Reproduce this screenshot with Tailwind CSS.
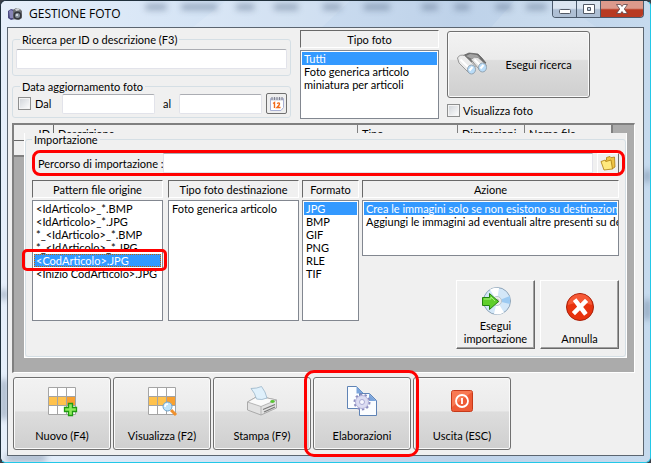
<!DOCTYPE html>
<html lang="it">
<head>
<meta charset="utf-8">
<title>GESTIONE FOTO</title>
<script src="https://cdn.jsdelivr.net/npm/@tailwindcss/browser@4"></script>
</head>
<body class="bg-[#3a3f48] font-[Lato,'Liberation_Sans',sans-serif] text-[11px] leading-[13px] text-black">
<main class="relative flex min-h-screen flex-col overflow-hidden rounded-md border border-[#20303c] border-r-[#22c8e8] border-b-[#22c8e8] bg-[#bcd2ea] px-[6px] pb-[6px]">
  <svg class="absolute inset-0 h-full w-full" preserveAspectRatio="none" viewBox="0 0 651 463" aria-hidden="true">
    <defs>
      <filter id="soft" x="-20%" y="-100%" width="140%" height="300%"><feGaussianBlur stdDeviation="3"/></filter>
      <linearGradient id="glass" x1="0" x2="1"><stop offset="0" stop-color="#e6effa"/><stop offset=".3" stop-color="#d5e4f5"/><stop offset=".7" stop-color="#bed2e9"/><stop offset="1" stop-color="#c6daee"/></linearGradient>
    </defs>
    <rect width="651" height="463" fill="url(#glass)"/>
    <path d="M190 28L225 0H350L320 28zM490 28L515 0H560L600 28z" fill="#fff" opacity=".12"/>
    <g fill="#566b88" opacity=".5" filter="url(#soft)">
      <rect x="145" y="3" width="21" height="6"/><rect x="181" y="3" width="36" height="6"/><rect x="236" y="3" width="18" height="6"/><rect x="274" y="3" width="24" height="6"/><rect x="323" y="3" width="18" height="6"/><rect x="364" y="3" width="26" height="6"/><rect x="422" y="3" width="16" height="6"/><rect x="455" y="3" width="15" height="6"/><rect x="496" y="3" width="16" height="6"/><rect x="527" y="3" width="20" height="6"/>
      <rect x="0" y="290" width="6" height="10"/><rect x="0" y="380" width="6" height="40"/><rect x="645" y="170" width="6" height="12"/><rect x="645" y="300" width="6" height="20"/><rect x="5" y="456" width="40" height="6"/>
    </g>
  </svg>

  <header class="relative flex h-[26px] items-start justify-between">
    <div class="flex items-center gap-[6px] pt-[5px]">
      <svg class="h-4 w-4" viewBox="0 0 16 16" aria-hidden="true">
        <path d="M1 5l3-2 4 1v9l-4 1-3-2z" fill="#4b4a80"/><path d="M2 5l2-1 2 1v7H3z" fill="#8886b8"/>
        <path d="M6 4l3-2 4 1 2 2v7l-3 2-6-1z" fill="#6b6e73"/><path d="M8 3l3-1 2 2-4 1z" fill="#d0d3d6"/>
        <circle cx="10.500" cy="9.500" r="4" fill="#33363c"/><circle cx="10.500" cy="9.500" r="2.500" fill="#87909c"/><circle cx="10" cy="9" r="1" fill="#e4ebf2"/>
      </svg>
      <h1 class="font-['Open_Sans','Noto_Sans',sans-serif] text-[12px] leading-4">GESTIONE FOTO</h1>
    </div>
    <div class="flex h-[17px] overflow-hidden rounded-b-[4px] border border-t-0 border-[#4b5a6c]">
      <button aria-label="Riduci a icona" class="flex w-6 items-center justify-center border-r border-[#4b5a6c] bg-linear-to-b from-[#dbe5f0] from-45% to-[#aebfd4] to-55%">
        <svg class="h-[14px] w-4" viewBox="0 0 16 14" aria-hidden="true"><rect x="2.500" y="7.500" width="11" height="4" rx="1" fill="#fff" stroke="#535a66"/></svg>
      </button>
      <button aria-label="Ingrandisci" class="flex w-6 items-center justify-center border-r border-[#4b5a6c] bg-linear-to-b from-[#dbe5f0] from-45% to-[#aebfd4] to-55%">
        <svg class="h-[14px] w-4" viewBox="0 0 16 14" aria-hidden="true"><path d="M2.500 2.500h11v9h-11zM6.500 5.500h3v3h-3z" fill="#fff" fill-rule="evenodd" stroke="#535a66"/></svg>
      </button>
      <button aria-label="Chiudi" class="flex w-[42px] items-center justify-center bg-linear-to-b from-[#dc9a8c] from-45% to-[#b83a22] to-55%">
        <svg class="h-[14px] w-4" viewBox="0 0 16 14" aria-hidden="true"><path d="M2.500 2.500h4L8 4.500l1.500-2h4L10.300 7l3.200 4.500h-4L8 9.500l-1.500 2h-4L5.700 7z" fill="#fff" stroke="#5b4348" stroke-width=".8"/></svg>
      </button>
    </div>
  </header>

  <div class="relative flex flex-1 flex-col gap-1 border border-[#5b6570] bg-[#f0f0f0] px-1 pt-[2px] pb-[5px]">
    <form class="flex items-start">
      <div class="flex min-w-0 flex-1 flex-col gap-1 pt-[3px]">
        <fieldset class="min-w-0 rounded-[3px] border border-[#d5dfe5] px-[3px] pb-[6px]">
          <legend class="ml-1 px-[2px]"><label for="q">Ricerca per ID o descrizione (F3)</label></legend>
          <input id="q" type="text" class="mt-[3px] block h-5 w-full rounded-[2px] border border-[#e2e3ea] border-t-[#abadb3] bg-white px-1">
        </fieldset>
        <fieldset class="min-w-0 rounded-[3px] border border-[#d5dfe5] px-[3px] pb-[3px]">
          <legend class="ml-1 px-[2px]">Data aggiornamento foto</legend>
          <div class="flex items-center">
            <input id="dal" type="checkbox" class="ml-[2px] h-[13px] w-[13px] appearance-none border border-[#8e8f8f] bg-linear-to-br from-[#cfd3d8] to-white shadow-[inset_0_0_0_1px_#f4f4f4]">
            <label for="dal" class="ml-1 w-[27px]">Dal</label>
            <input type="text" aria-label="Dal giorno" class="h-5 w-0 flex-1 rounded-[2px] border border-[#e2e3ea] border-t-[#abadb3] bg-white px-1">
            <label for="al" class="w-6 pl-2">al</label>
            <input id="al" type="text" class="h-5 w-[83px] shrink-0 rounded-[2px] border border-[#e2e3ea] border-t-[#abadb3] bg-white px-1">
            <button type="button" aria-label="Calendario" class="ml-1 flex h-[21px] w-[21px] shrink-0 items-center justify-center rounded-[2px] border border-[#707070] bg-[#eee]">
              <svg class="h-4 w-4" viewBox="0 0 16 16" aria-hidden="true"><path d="M1.500 2.500h13v9l-2.500 3h-10.500z" fill="#fff" stroke="#a9b0d4"/><path d="M2 1.500h12v3H2z" fill="#c9ccd8"/><path d="M3 1v3M5.500 1v3M8 1v3M10.500 1v3M13 1v3" stroke="#6c7080" stroke-width=".8"/><path d="M4 7.500l1.500-1V12M8 7.500q2.500-1.500 2.500.5 0 1-2.500 3.500h3.500" fill="none" stroke="#f26a1b" stroke-width="1.400"/></svg>
            </button>
          </div>
        </fieldset>
      </div>

      <div class="ml-[9px] flex w-[139px] flex-col gap-[2px]">
        <label for="tipo" class="h-[18px] border border-white border-t-[#696969] border-l-[#696969] pt-[2px] text-center">Tipo foto</label>
        <select id="tipo" size="5" class="h-[69px] overflow-hidden border border-[#828790] bg-white p-px">
          <option selected class="min-h-0 bg-linear-to-r from-[#3399ff] to-[#3399ff] p-0 pl-[2px] text-white">Tutti</option>
          <option class="min-h-0 p-0 pl-[2px]">Foto generica articolo</option>
          <option class="min-h-0 p-0 pl-[2px]">miniatura per articoli</option>
        </select>
      </div>

      <div class="mt-px mr-[49px] ml-2 flex w-[143px] flex-col gap-[6px]">
        <button type="button" class="flex h-[67px] items-center rounded-[3px] border border-[#707070] bg-[linear-gradient(#f2f2f2,#ebebeb_42%,#dddddd_44%,#cfcfcf)] pl-2 shadow-[inset_0_0_0_1px_#fafafa]">
          <svg class="h-8 w-8" viewBox="0 0 32 32" aria-hidden="true">
            <path d="M2 9l4-2 7-3 9 1 4 4 4 5-7 3-7-5-3 4-9-2z" fill="#6e6e6e" stroke="#5c5c5c" stroke-width=".7"/><path d="M10 7l4-2 7 1 3 3-8 1z" fill="#a4a4a4"/>
            <path d="M1.500 9q2-4 7-2.500L19.500 17l-6.500 7L3 14z" fill="#ececec" stroke="#868686" stroke-width=".8"/><path d="M15 10.500q3-3.500 7-2l8.500 7.500-6 6z" fill="#e4e4e4" stroke="#868686" stroke-width=".8"/>
            <path d="M4.500 10.500l9 9M18.500 10.500l7 7" stroke="#fff" stroke-width="2"/>
            <ellipse cx="15.500" cy="20.500" rx="4" ry="4.500" fill="#b9dcf8" stroke="#8695a2" stroke-width=".8"/><ellipse cx="26.500" cy="18.500" rx="4" ry="4.500" fill="#b9dcf8" stroke="#8695a2" stroke-width=".8"/>
            <path d="M13.500 21.500l3-3.500M24.500 19.500l3-3.500" stroke="#fff" stroke-width="2"/>
          </svg>
          <span class="flex-1 text-center">Esegui ricerca</span>
        </button>
        <div class="flex items-center gap-[3px]">
          <input id="vis" type="checkbox" class="h-[13px] w-[13px] appearance-none border border-[#8e8f8f] bg-linear-to-br from-[#cfd3d8] to-white shadow-[inset_0_0_0_1px_#f4f4f4]">
          <label for="vis">Visualizza foto</label>
        </div>
      </div>
    </form>

    <section class="mr-1 grid flex-1 border-t-2 border-r border-b border-l-2 border-[#808080] border-r-white border-b-white bg-[#ababab]">
      <table class="col-start-1 row-start-1 w-full table-fixed border-separate border-spacing-0 self-start">
        <thead>
          <tr class="h-[16px] bg-[#f0f0f0] text-left align-top">
            <th class="w-10 border-r border-b border-[#696969] p-0 pt-[2px] pr-[3px] text-right font-normal">ID</th>
            <th class="border-r border-b border-[#808080] p-0 pt-[2px] pl-1 font-normal">Descrizione</th>
            <th class="w-[100px] border-r border-b border-[#808080] p-0 pt-[2px] pl-1 font-normal">Tipo</th>
            <th class="w-[67px] border-r border-b border-[#808080] p-0 pt-[2px] pl-1 font-normal">Dimensioni</th>
            <th class="w-[88px] border-r-2 border-b border-[#808080] p-0 pt-[2px] pl-1 font-normal">Nome file</th>
            <th class="w-[21px] bg-[#ababab] p-0"></th>
          </tr>
        </thead>
        <tbody><tr class="h-4"><td class="border-b-2 border-[#808080] bg-[#f0f0f0]"></td><td></td><td></td><td></td><td></td><td></td></tr></tbody>
      </table>

      <form class="z-10 col-start-1 row-start-1 mt-2 mr-[7px] mb-[14px] ml-[10px] flex flex-col border-r border-b border-l border-white bg-[#f0f0f0]">
        <fieldset class="min-w-0 flex-1 rounded-[3px] border border-[#d5dfe5] px-[6px] pb-[5px]">
          <legend class="px-[2px]">Importazione</legend>
          <div class="relative mt-[6px] flex h-[22px] items-center">
            <label for="path" class="w-[131px] pl-[6px] whitespace-nowrap">Percorso di importazione :</label>
            <input id="path" type="text" class="h-5 min-w-0 flex-1 border border-[#e2e3ea] border-t-[#abadb3] bg-white px-1">
            <button type="button" aria-label="Sfoglia" class="ml-1 flex h-[21px] w-[22px] items-center justify-center border border-white border-r-[#696969] border-b-[#696969]">
              <svg class="h-4 w-4" viewBox="0 0 16 16" aria-hidden="true"><path d="M4 6l2.500-1V2.500L10 1.500l1 1.200 3.500-.7.500 10-3 2z" fill="#efc445" stroke="#a97c12" stroke-width=".8"/><path d="M1 6.500l3.500-1.200L6 6.500l5-1.500 1.500 9L4 15z" fill="#ffe97e" stroke="#a97c12" stroke-width=".8"/></svg>
            </button>
            <span class="pointer-events-none absolute -top-[2px] -right-[6px] -bottom-[2px] left-0 rounded-[8px] border-3 border-[#ff0000]"></span>
          </div>

          <div class="mt-[6px] flex items-start">
            <div class="relative flex w-[131px] flex-col gap-[2px]">
              <label for="pat" class="h-[18px] border border-white border-t-[#696969] border-l-[#696969] pt-[2px] text-center">Pattern file origine</label>
              <select id="pat" size="9" class="h-[121px] overflow-hidden border border-[#828790] bg-white p-px">
                <option class="min-h-0 p-0 pl-[2px]">&lt;IdArticolo&gt;_*.BMP</option>
                <option class="min-h-0 p-0 pl-[2px]">&lt;IdArticolo&gt;_*.JPG</option>
                <option class="min-h-0 p-0 pl-[2px]">*_&lt;IdArticolo&gt;_*.BMP</option>
                <option class="min-h-0 p-0 pl-[2px]">*_&lt;IdArticolo&gt;_*.JPG</option>
                <option selected class="min-h-0 bg-linear-to-r from-[#3399ff] to-[#3399ff] p-0 pl-[2px] text-white outline-1 -outline-offset-1 outline-[#c66000] outline-dotted">&lt;CodArticolo&gt;.JPG</option>
                <option class="min-h-0 p-0 pl-[2px]">&lt;Inizio CodArticolo&gt;.JPG</option>
              </select>
              <span class="pointer-events-none absolute top-[69px] -right-1 -left-[10px] h-[22px] rounded-[5px] border-3 border-[#ff0000]"></span>
            </div>
            <div class="ml-[5px] flex w-[131px] flex-col gap-[2px]">
              <label for="dest" class="h-[18px] border border-white border-t-[#696969] border-l-[#696969] pt-[2px] text-center">Tipo foto destinazione</label>
              <select id="dest" size="9" class="h-[121px] overflow-hidden border border-[#828790] bg-white p-px">
                <option class="min-h-0 p-0 pl-[2px]">Foto generica articolo</option>
              </select>
            </div>
            <div class="ml-[3px] flex w-[57px] flex-col gap-[2px]">
              <label for="fmt" class="h-[18px] border border-white border-t-[#696969] border-l-[#696969] pt-[2px] text-center">Formato</label>
              <select id="fmt" size="9" class="h-[121px] overflow-hidden border border-[#828790] bg-white p-px">
                <option selected class="min-h-0 bg-linear-to-r from-[#3399ff] to-[#3399ff] p-0 pl-[2px] text-white">JPG</option>
                <option class="min-h-0 p-0 pl-[2px]">BMP</option>
                <option class="min-h-0 p-0 pl-[2px]">GIF</option>
                <option class="min-h-0 p-0 pl-[2px]">PNG</option>
                <option class="min-h-0 p-0 pl-[2px]">RLE</option>
                <option class="min-h-0 p-0 pl-[2px]">TIF</option>
              </select>
            </div>
            <div class="ml-[3px] flex min-w-0 flex-1 flex-col gap-[2px]">
              <label for="act" class="h-[18px] border border-white border-t-[#696969] border-l-[#696969] pt-[2px] text-center">Azione</label>
              <select id="act" size="4" class="h-[56px] w-full overflow-hidden border border-[#828790] bg-white p-px">
                <option selected class="min-h-0 bg-linear-to-r from-[#3399ff] to-[#3399ff] p-0 pl-[2px] text-white">Crea le immagini solo se non esistono su destinazione</option>
                <option class="min-h-0 p-0 pl-[2px]">Aggiungi le immagini ad eventuali altre presenti su destinazione</option>
              </select>
              <div class="mt-[22px] flex justify-end gap-[5px]">
                <button type="button" class="flex h-[69px] w-[79px] flex-col items-center justify-between border border-white border-r-[#696969] border-b-[#696969] pt-1 pb-[3px] shadow-[inset_-1px_-1px_0_#a0a0a0]">
                  <svg class="h-8 w-8" viewBox="0 0 32 32" aria-hidden="true">
                    <circle cx="17" cy="16" r="13.500" fill="#d3e7f8" stroke="#8ea4b8"/><path d="M17 16L10 4.500A13.500 13.500 0 0 1 19 3zM17 16l7 11.500A13 13 0 0 1 14 29z" fill="#fff"/><path d="M17 16l13-5v8z" fill="#9ccaf2"/><circle cx="17" cy="16" r="4.500" fill="#eee" stroke="#b8c4ce"/><circle cx="17" cy="16" r="1.800" fill="#fff" stroke="#aaa"/>
                    <path d="M2.500 12.500h7v-4l9 8-9 8v-4h-7z" fill="#5fce2b" stroke="#23820e"/><path d="M4 14h7v-2l4 4" fill="none" stroke="#a9ef7f"/>
                  </svg>
                  <span>Esegui<br>importazione</span>
                </button>
                <button type="button" class="flex h-[69px] w-[79px] flex-col items-center justify-between border border-white border-r-[#696969] border-b-[#696969] pt-[10px] pb-[3px] shadow-[inset_-1px_-1px_0_#a0a0a0]">
                  <svg class="h-8 w-8" viewBox="0 0 32 32" aria-hidden="true"><circle cx="16" cy="16" r="13.500" fill="#e8330f" stroke="#a8200a"/><path d="M4 14a12 11 0 0 1 24 0q-12-5-24 0z" fill="#ff7350" opacity=".6"/><path d="M12 10.500l8.500 11M21 11L11 21" stroke="#fff" stroke-width="4.500" stroke-linecap="square"/></svg>
                  <span>Annulla</span>
                </button>
              </div>
            </div>
          </div>
        </fieldset>
      </form>
    </section>

    <nav class="flex gap-[2px] pl-px">
      <button class="flex h-[73px] w-[98px] flex-col items-center justify-between rounded-[3px] border border-[#707070] bg-[linear-gradient(#f2f2f2,#ebebeb_46%,#dddddd_48%,#cfcfcf)] pt-[7px] pb-[7px] shadow-[inset_0_0_0_1px_#fafafa]">
        <svg class="h-8 w-8" viewBox="0 0 32 32" aria-hidden="true"><path d="M2.500 2.500h27v27h-27z" fill="#fff"/><path d="M2.500 12h27v8.500h-27z" fill="#ffc24d"/><path d="M21 12h8.500v8.500H21z" fill="#f8a030"/><path d="M2.500 2.500h27v27h-27zM11.500 2.500v27M20.500 2.500v27M2.500 11.500h27M2.500 20.500h27" fill="none" stroke="#a4a4a4"/><path d="M22.500 18.500h4v4h4v4h-4v4h-4v-4h-4v-4h4z" fill="#8dea5a" stroke="#1f9a12" stroke-width="1.300"/></svg>
        <span>Nuovo (F4)</span>
      </button>
      <button class="flex h-[73px] w-[98px] flex-col items-center justify-between rounded-[3px] border border-[#707070] bg-[linear-gradient(#f2f2f2,#ebebeb_46%,#dddddd_48%,#cfcfcf)] pt-[7px] pb-[7px] shadow-[inset_0_0_0_1px_#fafafa]">
        <svg class="h-8 w-8" viewBox="0 0 32 32" aria-hidden="true"><path d="M2.500 2.500h27v27h-27z" fill="#fff"/><path d="M2.500 12h27v8.500h-27z" fill="#ffc24d"/><path d="M21 12h8.500v8.500H21z" fill="#f8a030"/><path d="M2.500 2.500h27v27h-27zM11.500 2.500v27M20.500 2.500v27M2.500 11.500h27M2.500 20.500h27" fill="none" stroke="#a4a4a4"/><path d="M25 25l5 5" stroke="#f0902c" stroke-width="3"/><circle cx="21.500" cy="21.500" r="4.500" fill="#bfe4fa" stroke="#6fa3cc"/><path d="M19 22q0-3 3-3" stroke="#fff" stroke-width="1.500" fill="none"/></svg>
        <span>Visualizza (F2)</span>
      </button>
      <button class="flex h-[73px] w-[98px] flex-col items-center justify-between rounded-[3px] border border-[#707070] bg-[linear-gradient(#f2f2f2,#ebebeb_46%,#dddddd_48%,#cfcfcf)] pt-[7px] pb-[7px] shadow-[inset_0_0_0_1px_#fafafa]">
        <svg class="h-8 w-8" viewBox="0 0 32 32" aria-hidden="true"><path d="M1.500 17L12 11l18.500 4v8L15 30 1.500 25z" fill="#e2e2e2" stroke="#9b9b9b" stroke-width=".8"/><path d="M1.500 17L12 11l18.500 4L15 21.500z" fill="#fafafa" stroke="#a8a8a8" stroke-width=".8"/><path d="M15 21.500V30" stroke="#aaa" stroke-width=".8"/><path d="M17 24.500l12-5M18 27l11-5" stroke="#777" stroke-width="1.200"/><path d="M5 3.500Q11 3.500 15.500 1.500q4 5 5.500 11.500-5 2.500-10.500 1Q9 8 5 3.500z" fill="#dff0fb" stroke="#98b4c8" stroke-width=".8"/><ellipse cx="26.500" cy="16.500" rx="2.200" ry="1.400" fill="#58c433"/></svg>
        <span>Stampa (F9)</span>
      </button>
      <button class="relative flex h-[73px] w-[98px] flex-col items-center justify-between rounded-[3px] border border-[#707070] bg-[linear-gradient(#f2f2f2,#ebebeb_46%,#dddddd_48%,#cfcfcf)] pt-[7px] pb-[7px] shadow-[inset_0_0_0_1px_#fafafa]">
        <svg class="h-8 w-8" viewBox="0 0 32 32" aria-hidden="true"><path d="M1.500 1.500h9l7 7v15h-16z" fill="#fbfdff" stroke="#5f83b5"/><path d="M10.500 1.500l7 7h-7z" fill="#7ba5dc"/><path d="M13.500 8.500h10l7 7v15h-17z" fill="#fbfdff" stroke="#5f83b5"/><path d="M23 8.500l7.500 7.500H23z" fill="#7ba5dc"/><circle cx="16" cy="17" r="7.500" fill="none" stroke="#8d8dc0" stroke-width="2" stroke-dasharray="2.400 2.312"/><circle cx="16" cy="17" r="6.500" fill="#dcdcf2" stroke="#a4a4d0" stroke-width=".8"/><circle cx="16" cy="17" r="2.500" fill="#f8f8ff" stroke="#9c9ccc" stroke-width=".8"/></svg>
        <span>Elaborazioni</span>
        <span class="pointer-events-none absolute -top-2 -right-[9px] -bottom-2 -left-[10px] rounded-[10px] border-3 border-[#ff0000]"></span>
      </button>
      <button class="flex h-[73px] w-[98px] flex-col items-center justify-between rounded-[3px] border border-[#707070] bg-[linear-gradient(#f2f2f2,#ebebeb_46%,#dddddd_48%,#cfcfcf)] pt-[7px] pb-[7px] shadow-[inset_0_0_0_1px_#fafafa]">
        <svg class="h-8 w-8" viewBox="0 0 32 32" aria-hidden="true"><rect x="5.500" y="5.500" width="21" height="21" rx="2" fill="#ee5a35" stroke="#c63a1a"/><path d="M6 7q0-1 1-1h18q1 0 1 1L6 22z" fill="#ff8d68" opacity=".6"/><circle cx="16" cy="16" r="6" fill="none" stroke="#fff" stroke-width="1.800"/><path d="M16 13v6" stroke="#fff" stroke-width="1.800"/></svg>
        <span>Uscita (ESC)</span>
      </button>
    </nav>
  </div>
</main>
</body>
</html>
